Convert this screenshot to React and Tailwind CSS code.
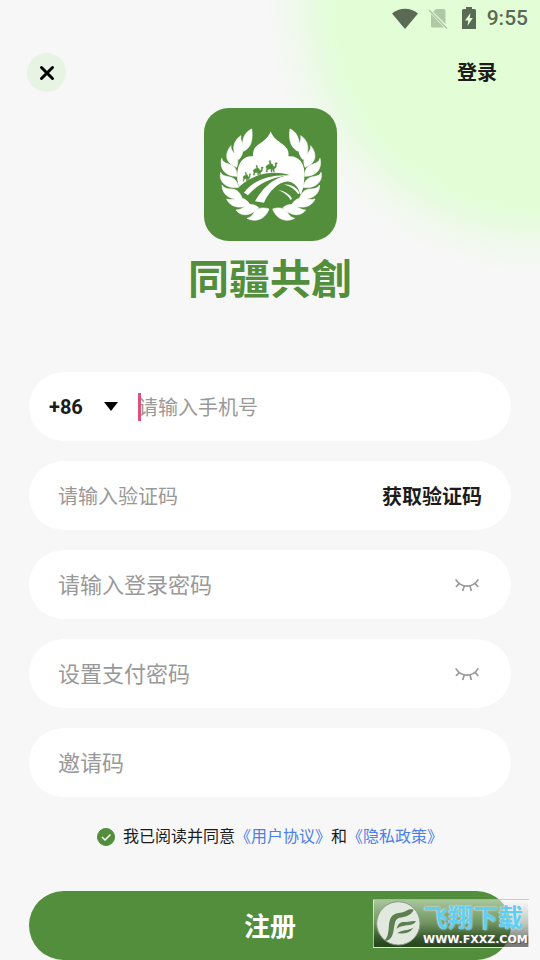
import React, { useState } from 'react';

const leaves = [
  "M265 72 C284 80 298 102 290 139 C268 130 260 105 265 72Z",
  "M297 92 C320 106 328 138 304 164 C286 146 290 118 296 108 C298 102 298 97 297 92Z",
  "M327 122 C348 148 344 174 310 187 C303 166 307 152 319 143 C325 136 328 130 327 122Z",
  "M355 160 C362 192 345 214 309 214 C309 192 317 182 335 177 C347 173 353 169 355 160Z",
  "M358 202 C365 232 339 252 304 247 C309 225 320 217 335 215 C348 213 356 210 358 202Z",
  "M354 240 C354 272 325 288 294 278 C302 259 314 251 328 252 C341 252 349 248 354 240Z",
  "M340 282 C330 305 303 314 270 299 C280 282 295 277 308 280 C320 284 330 285 340 282Z",
  "M312 315 C298 334 270 336 244 308 C258 296 274 297 284 304 C293 311 303 315 312 315Z",
  "M279 340 C256 352 226 346 213 312 C231 306 248 309 256 320 C262 331 269 338 279 340Z",
];

const camel =
  "M2 35 L4 26 C1 22 2 17 6 16 L9 13 L12 16 L13 8 L11 5 L14 1 L16 5 L17 12 L21 12 L23 17 L27 20 L30 18 L29 9 L35 8 L36 11 L33 13 C34 20 32 25 26 27 L27 36 L25 36 L22 28 L20 29 L20 36 L17 36 L17 27 L10 27 L6 31 L6 36Z";

const Logo = () => (
  <svg viewBox="7 9 399 399" className="block size-[133px]" role="img" aria-label="同疆共創">
    <rect x="7" y="9" width="399" height="399" rx="74" fill="#528e3b" />
    <path
      fill="#fff"
      d="M207 79 C214 100 232 110 243 118 C257 128 263 140 260 154 C286 150 307 170 308 200 C309 230 305 250 298 268 L290 296 L125 296 L114 248 C106 234 105 212 108 196 C112 166 132 150 154 154 C153 138 158 127 171 118 C184 110 200 100 207 79Z"
    />
    <path
      fill="#528e3b"
      d="M95 262 C140 212 200 192 264 210 C236 214 195 228 160 289 L187 293 C202 258 235 226 262 230 C280 233 291 248 296 268 L312 270 L308 322 L100 322Z"
    />
    <path fill="#fff" d="M127 263 C155 225 205 208 262 211 C210 216 167 238 139 271Z" />
    <path fill="#fff" d="M246 238 C268 238 286 248 294 264 L290 268 C281 254 266 244 246 238Z" />
    <path fill="#fff" d="M229 255 C248 257 265 268 271 281 L267 285 C259 271 246 261 229 255Z" />
    <g fill="#528e3b" stroke="#528e3b" strokeWidth="1.500">
      <path d={camel} transform="translate(191 165)" />
      <path d={camel} transform="translate(153 179) scale(.88)" />
      <path d={camel} transform="translate(123 200) scale(.68 .8)" />
    </g>
    <g fill="#fff" stroke="#fff" strokeWidth="2" strokeLinejoin="round">
      {leaves.map((d) => (
        <path key={d} d={d} />
      ))}
    </g>
    <g fill="#fff" stroke="#fff" strokeWidth="2" strokeLinejoin="round" transform="translate(415 0) scale(-1 1)">
      {leaves.map((d) => (
        <path key={d} d={d} />
      ))}
    </g>
  </svg>
);

const StatusBar = () => (
  <div className="flex h-9 items-center justify-end pr-3 text-[#5b6a55]">
    <svg viewBox="0 0 26 21" className="mr-2.5 h-[21px] w-[26px]" fill="currentColor">
      <path d="M0 5.500 C7 -1 19 -1 26 5.500 L13 21Z" />
    </svg>
    <svg viewBox="0 0 20 21" className="mr-3.5 h-[21px] w-5" fill="#b0c8a5">
      <path d="M8 1 H15.500 Q17.500 1 17.500 3 V16 L5 3.800Z" />
      <path d="M3 6 L16 19.500 H4.500 Q3 19.500 3 18Z" />
      <path d="M1 2 L19 20.500" stroke="#b0c8a5" strokeWidth="1.600" />
    </svg>
    <svg viewBox="0 0 14 22" className="mr-[11px] h-[22px] w-3.5">
      <path fill="currentColor" d="M4 0 H10 V2 H12.500 Q14 2 14 3.500 V22 H0 V3.500 Q0 2 1.500 2 H4Z" />
      <path fill="#e3fed7" d="M8.500 6 L3 13.500 H6.300 L5.500 19 L10.800 11 H7.700Z" />
    </svg>
    <span className="font-['Roboto'] text-[21px] leading-6 font-medium">9:55</span>
  </div>
);

const ClosedEye = () => (
  <svg viewBox="282 348 78 48" className="h-4 w-[26px]" fill="none" stroke="#999" strokeWidth="5">
    <path d="M287 355 C304 382 338 382 355 355" />
    <path d="M298 367 L288 378 M313 375 L308 390 M330 375 L334 390 M345 367 L355 378" />
  </svg>
);

const Field = ({ children }) => (
  <div className="flex h-[69px] items-center rounded-full bg-white pr-[29px] pl-[29px]">{children}</div>
);

const PasswordField = ({ label }) => {
  const [visible, setVisible] = useState(false);

  return (
    <Field>
      <input
        type={visible ? "text" : "password"}
        aria-label={label}
        placeholder={label}
        className="h-10 min-w-0 flex-1 bg-transparent pt-0.5 text-[22px] outline-none placeholder:text-[#999]"
      />
      <button type="button" aria-label="显示密码" onClick={() => setVisible(!visible)} className="pr-0.5">
        <ClosedEye />
      </button>
    </Field>
  );
};

const Watermark = () => (
  <div className="absolute right-[11px] bottom-3 flex h-[49px] w-[156px] items-center border border-white/60 bg-linear-to-b from-white/50 via-[#8a9a85]/50 to-black/50 pl-0.5">
    <svg viewBox="0 0 135 135" className="size-[45px] shrink-0">
      <circle cx="67" cy="67" r="65" fill="#e1e8de" stroke="#8b9985" strokeWidth="3" />
      <path
        fill="#5c7e50"
        d="M25 119 C44 100 34 72 44 51 C54 32 74 39 91 29 C98 25 106 24 113 26 C105 45 86 47 70 50 C51 55 58 82 48 105 C43 116 34 121 25 119Z"
      />
      <path
        fill="#5c7e50"
        d="M62 84 C65 67 74 61 88 63 C100 64 108 58 120 61 C113 73 98 72 86 74 C74 75 68 78 62 84Z M64 97 C78 84 94 91 112 80 C101 97 84 98 64 97Z"
      />
    </svg>
    <div className="flex flex-col pt-1.5 pl-0.5 font-bold whitespace-nowrap">
      <span className="text-[25px] leading-[26px] text-[#60cdf3] [text-shadow:0_0_2px_#fff]">飞翔下载</span>
      <span className="font-['DejaVu_Sans'] text-[11px] leading-4 text-white [text-shadow:1px_1px_1px_#555]">
        WWW.FXXZ.COM
      </span>
    </div>
  </div>
);

const Register = () => {
  const [agreed, setAgreed] = useState(true);

  return (
    <div className="relative min-h-screen bg-[#f7f7f7] bg-[radial-gradient(circle_at_100%_0,#e3fed7_205px,#e7fbe0_225px,#f0f9ec_245px,#f7f7f7_275px)] font-['Roboto','Noto_Sans_CJK_SC',sans-serif] text-[#1c1c1c]">
      <StatusBar />

      <header className="flex items-center justify-between pt-[17px] pr-[43px] pl-[27px]">
        <button
          type="button"
          aria-label="关闭"
          className="flex size-[39px] items-center justify-center rounded-full bg-[#e8f4e3]"
        >
          <svg viewBox="0 0 16 16" className="size-4" stroke="#000" strokeWidth="3" strokeLinecap="round">
            <path d="M2.500 2.500 L13.500 13.500 M13.500 2.500 L2.500 13.500" />
          </svg>
        </button>
        <a href="#login" className="text-xl font-bold">登录</a>
      </header>

      <div className="flex flex-col items-center pt-4">
        <Logo />
        <h1 className="mt-2 font-['Noto_Sans_CJK_TC',sans-serif] text-[41px] leading-[54px] font-bold text-[#528e3b]">
          同疆共創
        </h1>
      </div>

      <form className="px-[29px] pt-[69px]" onSubmit={(e) => e.preventDefault()}>
        <div className="flex flex-col gap-5">
          <div className="flex h-[69px] items-center rounded-full bg-white px-5">
            <div className="relative flex w-[69px] items-center">
              <select aria-label="国家代码" className="w-full appearance-none bg-transparent text-xl font-bold outline-none">
                <option>+86</option>
              </select>
              <svg viewBox="0 0 14 9" className="pointer-events-none absolute right-0 h-[9px] w-3.5">
                <path d="M0 0 H14 L7 9Z" />
              </svg>
            </div>
            <div className="relative ml-5 flex min-w-0 flex-1 items-center">
              <span className="absolute left-0 h-7 w-[3px] bg-[#e0507d]" />
              <input
                type="tel"
                aria-label="请输入手机号"
                placeholder="请输入手机号"
                className="h-10 w-full bg-transparent pt-0.5 text-xl outline-none placeholder:text-[#999]"
              />
            </div>
          </div>

          <Field>
            <input
              type="text"
              aria-label="请输入验证码"
              placeholder="请输入验证码"
              className="h-10 min-w-0 flex-1 bg-transparent pt-0.5 text-xl outline-none placeholder:text-[#999]"
            />
            <button type="button" className="pt-0.5 text-xl font-bold">获取验证码</button>
          </Field>

          <PasswordField label="请输入登录密码" />
          <PasswordField label="设置支付密码" />

          <Field>
            <input
              type="text"
              aria-label="邀请码"
              placeholder="邀请码"
              className="h-10 min-w-0 flex-1 bg-transparent pt-0.5 text-[22px] outline-none placeholder:text-[#999]"
            />
          </Field>
        </div>

        <div className="mt-7 flex h-6 items-center justify-center text-base">
          <div className="relative mr-2 flex size-[18px]">
            <input
              id="agree"
              type="checkbox"
              checked={agreed}
              onChange={(e) => setAgreed(e.target.checked)}
              className="size-[18px] appearance-none rounded-full border border-[#528e3b] checked:bg-[#528e3b]"
            />
            {agreed && (
              <svg viewBox="0 0 18 18" className="pointer-events-none absolute inset-0" fill="none" stroke="#fff" strokeWidth="1.500">
                <path d="M5 9 L8 12 L13.500 6.500" />
              </svg>
            )}
          </div>
          <label htmlFor="agree">我已阅读并同意</label>
          <a href="#terms" className="text-[#4c7fe8]">《用户协议》</a>
          <span>和</span>
          <a href="#privacy" className="text-[#4c7fe8]">《隐私政策》</a>
        </div>

        <button type="submit" className="mt-[42px] h-[69px] w-full rounded-full bg-[#528e3b] pt-1 text-[26px] font-bold text-white">
          注册
        </button>
      </form>

      <Watermark />
    </div>
  );
};

export default Register;
